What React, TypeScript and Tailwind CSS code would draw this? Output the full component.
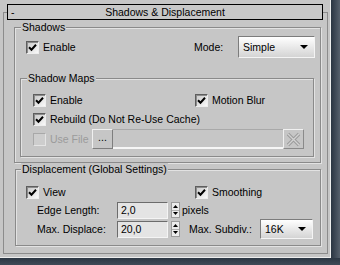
import React from "react";

const Check = ({ checked = true, disabled = false }: { checked?: boolean; disabled?: boolean }) => (
  <span
    className={
      "w-[13px] h-[13px] shrink-0 flex items-center justify-center border " +
      (disabled
        ? "border-t-[#a8a8a8] border-l-[#a8a8a8] border-b-[#e4e4e4] border-r-[#e4e4e4] bg-[#cdcdcd]"
        : "border-t-[#5e5e5e] border-l-[#5e5e5e] border-b-[#eeeeee] border-r-[#eeeeee] bg-linear-to-br from-[#c8c8c8] to-[#fafafa] shadow-[inset_1px_1px_0_#8c8c8c]")
    }
  >
    {checked && (
      <svg width="9" height="9" viewBox="0 0 9 9">
        <path d="M1 4.2 L3.5 6.7 L8 1.8" fill="none" stroke="#000" strokeWidth="2" />
      </svg>
    )}
  </span>
);

const Arrow = () => (
  <svg width="8" height="4" viewBox="0 0 8 4" className="shrink-0">
    <path d="M0 0 H8 L4 4 Z" fill="#000" />
  </svg>
);

const Dropdown = ({ value, w }: { value: string; w: string }) => (
  <div
    className={
      w +
      " h-full flex items-center justify-between pl-[4px] pr-[6px] border border-t-[#7c7c7c] border-l-[#7c7c7c] border-b-[#f4f4f4] border-r-[#f4f4f4] bg-linear-to-b from-[#ffffff] to-[#d4d4d4]"
    }
  >
    <span>{value}</span>
    <Arrow />
  </div>
);

const Spinner = () => (
  <div className="w-[9px] h-[16px] flex flex-col border border-[#9c9c9c] bg-[#ececec]">
    <div className="flex-1 flex items-center justify-center border-b border-[#b0b0b0]">
      <svg width="5" height="3" viewBox="0 0 5 3">
        <path d="M0 3 H5 L2.5 0 Z" fill="#000" />
      </svg>
    </div>
    <div className="flex-1 flex items-center justify-center">
      <svg width="5" height="3" viewBox="0 0 5 3">
        <path d="M0 0 H5 L2.5 3 Z" fill="#000" />
      </svg>
    </div>
  </div>
);

const NumInput = ({ value }: { value: string }) => (
  <div className="w-[51px] h-[17px] flex items-center pl-[3px] border border-t-[#6c6c6c] border-l-[#6c6c6c] border-b-[#f4f4f4] border-r-[#f4f4f4] bg-[#e4e4e4]">
    {value}
  </div>
);

const groupCls =
  "border border-[#8a8a8a] shadow-[inset_1px_1px_0_#e2e2e2,1px_1px_0_#e2e2e2] flex flex-col";

export default function App() {
  return (
    <div className="w-[340px] h-[265px] bg-[#36424f] flex flex-col font-['Liberation_Sans',Arial,sans-serif] text-[10.5px] leading-[13px] text-black">
      <div className="flex h-[258px]">
        <div className="w-[331px] h-[258px] bg-[#c6c6c6] border-r border-b border-[#ededed] flex flex-col">
          <div className="ml-[3px] mt-[12px] w-[325px] h-[242px] border border-[#8c8c8c] flex flex-col">
            {/* title bar */}
            <div className="-mt-[9px] ml-[3px] w-[316px] h-[16px] border border-black bg-[#c8c8c8] flex items-center">
              <span className="ml-[3px] w-[5px]">-</span>
              <span className="flex-1 text-center">Shadows &amp; Displacement</span>
              <span className="w-[8px]" />
            </div>

            {/* Shadows group */}
            <div className={"ml-[10px] mt-[7px] w-[307px] h-[136px] " + groupCls}>
              <span className="-mt-[7px] ml-[6px] px-[1px] self-start bg-[#c6c6c6]">Shadows</span>
              <div className="mt-[2px] h-[22px] flex items-center">
                <div className="w-[179px] flex items-center gap-[4px] pl-[11px]">
                  <Check />
                  <span>Enable</span>
                </div>
                <span className="w-[44px]">Mode:</span>
                <Dropdown value="Simple" w="w-[77px]" />
              </div>

              {/* Shadow Maps group */}
              <div className={"ml-[5px] mt-[20px] w-[294px] h-[79px] " + groupCls}>
                <span className="-mt-[7px] ml-[6px] px-[1px] self-start bg-[#c6c6c6]">Shadow Maps</span>
                <div className="mt-[6px] h-[19px] flex items-center">
                  <div className="w-[174px] flex items-center gap-[4px] pl-[12px]">
                    <Check />
                    <span>Enable</span>
                  </div>
                  <div className="flex items-center gap-[4px]">
                    <Check />
                    <span>Motion Blur</span>
                  </div>
                </div>
                <div className="h-[19px] flex items-center gap-[4px] pl-[12px]">
                  <Check />
                  <span>Rebuild (Do Not Re-Use Cache)</span>
                </div>
                <div className="h-[20px] flex items-center">
                  <div className="w-[71px] flex items-center gap-[4px] pl-[12px]">
                    <Check checked={false} disabled />
                    <span className="text-[#9b9b9b]">Use File</span>
                  </div>
                  <div className="w-[21px] h-[20px] flex items-center justify-center border border-t-[#f0f0f0] border-l-[#f0f0f0] border-b-[#7e7e7e] border-r-[#7e7e7e] pb-[3px]">
                    ...
                  </div>
                  <div className="w-[170px] h-[20px] border-t border-t-[#a9a9a9] border-b-2 border-b-[#f6f6f6]" />
                  <div className="w-[21px] h-[20px] flex items-center justify-center border border-t-[#f0f0f0] border-l-[#f0f0f0] border-b-[#8a8a8a] border-r-[#8a8a8a]">
                    <svg width="15" height="15" viewBox="0 0 15 15">
                      <path d="M2 2 L13 13 M13 2 L2 13" stroke="#9a9a9a" strokeWidth="3.2" />
                      <path d="M2 2 L13 13 M13 2 L2 13" stroke="#d2d2d2" strokeWidth="1.4" />
                    </svg>
                  </div>
                </div>
              </div>
            </div>

            {/* Displacement group */}
            <div className={"ml-[11px] mt-[6px] w-[306px] h-[77px] " + groupCls}>
              <span className="-mt-[7px] ml-[5px] px-[1px] self-start bg-[#c6c6c6]">
                Displacement (Global Settings)
              </span>
              <div className="mt-[8px] h-[16px] flex items-center">
                <div className="w-[179px] flex items-center gap-[4px] pl-[10px]">
                  <Check />
                  <span>View</span>
                </div>
                <div className="flex items-center gap-[4px]">
                  <Check />
                  <span>Smoothing</span>
                </div>
              </div>
              <div className="mt-[1px] h-[18px] flex items-center">
                <span className="ml-[21px] w-[80px]">Edge Length:</span>
                <NumInput value="2,0" />
                <div className="ml-[3px]">
                  <Spinner />
                </div>
                <span className="ml-[2px]">pixels</span>
              </div>
              <div className="h-[20px] flex items-center">
                <span className="ml-[21px] w-[80px]">Max. Displace:</span>
                <NumInput value="20,0" />
                <div className="ml-[3px]">
                  <Spinner />
                </div>
                <span className="ml-[9px] w-[71px]">Max. Subdiv.:</span>
                <Dropdown value="16K" w="w-[53px]" />
              </div>
            </div>
          </div>
        </div>
        <div className="flex-1 bg-linear-to-r from-[#2a3542] to-[#56606c]" />
      </div>
      <div className="flex-1 bg-linear-to-b from-[#2c3744] to-[#3f4a57]" />
    </div>
  );
}
